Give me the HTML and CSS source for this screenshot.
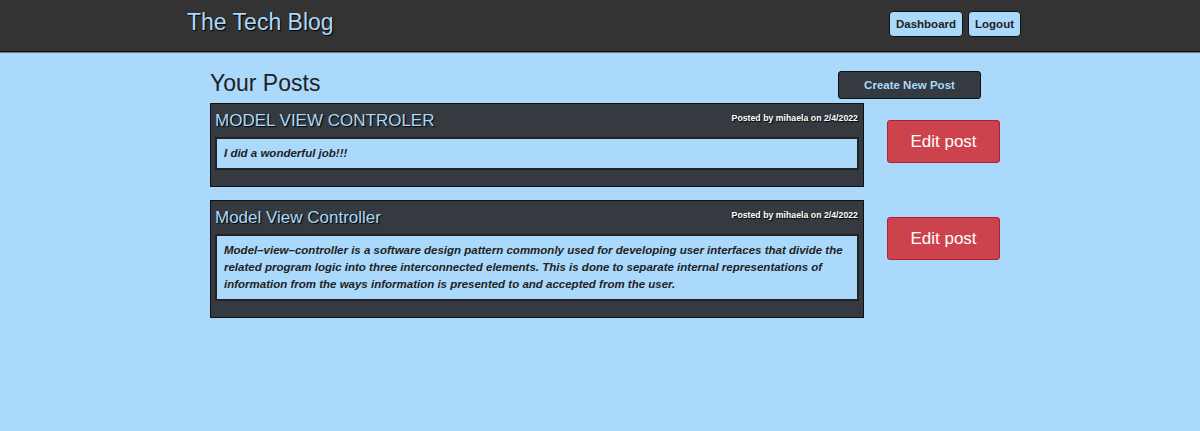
FILE: index.html
```html
<!DOCTYPE html>
<html lang="en">
<head>
<meta charset="utf-8">
<title>The Tech Blog</title>
<link rel="stylesheet" href="styles.css">
</head>
<body>
<header class="site-header">
  <div class="header-inner">
    <h1 class="brand">The Tech Blog</h1>
    <nav class="nav">
      <button class="nav-btn">Dashboard</button>
      <button class="nav-btn">Logout</button>
    </nav>
  </div>
</header>
<main class="main">
  <div class="top-row">
    <h2 class="page-title">Your Posts</h2>
    <button class="create-btn">Create New Post</button>
  </div>
  <div class="post-row">
    <article class="post">
      <div class="post-head">
        <h3 class="post-title">MODEL VIEW CONTROLER</h3>
        <span class="post-meta">Posted by mihaela on 2/4/2022</span>
      </div>
      <div class="post-body">I did a wonderful job!!!</div>
    </article>
    <button class="edit-btn">Edit post</button>
  </div>
  <div class="post-row">
    <article class="post">
      <div class="post-head">
        <h3 class="post-title">Model View Controller</h3>
        <span class="post-meta">Posted by mihaela on 2/4/2022</span>
      </div>
      <div class="post-body">Model–view–controller is a software design pattern commonly used for developing user interfaces that divide the related program logic into three interconnected elements. This is done to separate internal representations of information from the ways information is presented to and accepted from the user.</div>
    </article>
    <button class="edit-btn">Edit post</button>
  </div>
</main>
</body>
</html>
```
FILE: styles.css
```css
* { box-sizing: border-box; }
html, body { margin: 0; padding: 0; }
body {
  background: #aad9fb;
  font-family: "Liberation Sans", Arial, sans-serif;
  color: #222;
  min-height: 431px;
}
.site-header {
  background: #333333;
  border-bottom: 1px solid #111;
  box-shadow: 0 1px 0 #6f7a84;
  height: 52px;
}
.header-inner {
  width: 834px;
  margin: 0 0 0 187px;
  display: flex;
  justify-content: space-between;
  align-items: flex-start;
}
.brand {
  margin: 8px 0 0 0;
  font-size: 23px;
  font-weight: normal;
  color: #aad9fb;
  text-shadow: 1px 1px 1px #000;
  line-height: 29px;
}
.nav {
  display: flex;
  gap: 5px;
  margin-top: 11px;
}
.nav-btn {
  background: #aad9fb;
  border: 1px solid #111;
  border-radius: 4px;
  font-family: "Liberation Sans", Arial, sans-serif;
  font-weight: bold;
  font-size: 11.5px;
  color: #222;
  height: 26px;
  padding: 0 6px;
}
.main {
  width: 790px;
  margin: 0 0 0 210px;
}
.top-row {
  display: flex;
  align-items: flex-start;
  width: 771px;
  justify-content: space-between;
  margin-top: 18px;
  height: 33px;
}
.page-title {
  margin: 0;
  font-size: 23px;
  font-weight: normal;
  line-height: 26px;
  color: #222;
}
.create-btn {
  background: #343a40;
  color: #aad9fb;
  border: 1px solid #111;
  border-radius: 3px;
  width: 143px;
  height: 28px;
  font-family: "Liberation Sans", Arial, sans-serif;
  font-weight: bold;
  font-size: 11.5px;
  margin-top: 1px;
}
.post-row {
  display: flex;
  align-items: flex-start;
  gap: 23px;
  margin-bottom: 13px;
}
.post {
  width: 654px;
  background: #343a40;
  border: 1px solid #111;
  padding: 4px 4px 16px 4px;
}
.post-head {
  display: flex;
  justify-content: space-between;
  align-items: flex-start;
  height: 29px;
}
.post-title {
  margin: 3px 0 0 0;
  font-size: 17px;
  font-weight: normal;
  line-height: 20px;
  color: #aad9fb;
  text-shadow: 1px 1px 1px #000;
}
.post-meta {
  margin: 5px 1px 0 0;
  font-size: 8.75px;
  font-weight: bold;
  color: #fff;
  text-shadow: 1px 1px 1px #000;
}
.post-body {
  background: #aad9fb;
  border: 2px solid #222;
  padding: 6px 3px 6px 7px;
  font-size: 11.5px;
  line-height: 17px;
  font-style: italic;
  font-weight: bold;
  color: #222;
}
.edit-btn {
  margin-top: 17px;
  width: 113px;
  height: 43px;
  background: #cc434e;
  border: 1px solid #b21f2d;
  border-radius: 3px;
  color: #fff;
  font-family: "Liberation Sans", Arial, sans-serif;
  font-size: 17px;
}
```
